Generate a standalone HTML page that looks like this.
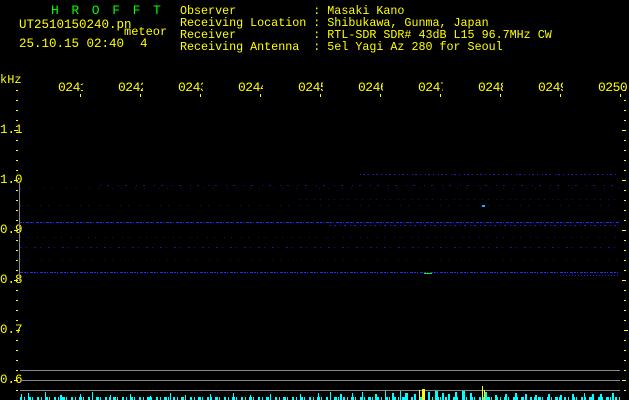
<!DOCTYPE html><html><head><style>
body{margin:0;background:#000;width:629px;height:400px;overflow:hidden;position:relative;font-family:"Liberation Mono",monospace;color:#ff0;}
.t{position:absolute;font-size:11.7px;line-height:12px;white-space:pre;}
.g{color:#0f0;}
.lab{position:absolute;top:80px;font-size:13px;width:25px;overflow:hidden;white-space:nowrap;letter-spacing:-0.5px}
</style></head><body>
<div class="t g" style="left:51px;top:5px;font-size:13px;letter-spacing:12.6px">HROFFT</div>
<div class="t" style="left:19px;top:19px;font-size:12.5px">UT2510150240.pn</div>
<div class="t" style="left:124px;top:26px;font-size:12px">meteor</div>
<div class="t" style="left:19px;top:38px;font-size:12.5px">25.10.15 02:40</div>
<div class="t" style="left:140px;top:38px;font-size:12.5px">4</div>
<div class="t" style="left:180px;top:5px">Observer           : Masaki Kano
Receiving Location : Shibukawa, Gunma, Japan
Receiver           : RTL-SDR SDR# 43dB L15 96.7MHz CW
Receiving Antenna  : 5el Yagi Az 280 for Seoul</div>
<div class="t" style="left:0;top:74px;font-size:12px">kHz</div>
<div class="lab" style="left:58px">0241</div><div class="lab" style="left:118px">0242</div><div class="lab" style="left:178px">0243</div><div class="lab" style="left:238px">0244</div><div class="lab" style="left:298px">0245</div><div class="lab" style="left:358px">0246</div><div class="lab" style="left:418px">0247</div><div class="lab" style="left:478px">0248</div><div class="lab" style="left:538px">0249</div><div class="lab" style="left:598px;width:30px">0250</div>
<div class="t" style="left:0;top:124px;font-size:12.5px">1.1</div>
<div class="t" style="left:0;top:174px;font-size:12.5px">1.0</div>
<div class="t" style="left:0;top:224px;font-size:12.5px">0.9</div>
<div class="t" style="left:0;top:274px;font-size:12.5px">0.8</div>
<div class="t" style="left:0;top:324px;font-size:12.5px">0.7</div>
<div class="t" style="left:0;top:374px;font-size:12.5px">0.6</div>
<svg width="629" height="400" style="position:absolute;left:0;top:0">
<g fill="#ff0">
<rect x="80" y="94" width="1" height="3"/><rect x="140" y="94" width="1" height="3"/><rect x="200" y="94" width="1" height="3"/><rect x="260" y="94" width="1" height="3"/><rect x="320" y="94" width="1" height="3"/><rect x="380" y="94" width="1" height="3"/><rect x="440" y="94" width="1" height="3"/><rect x="500" y="94" width="1" height="3"/><rect x="560" y="94" width="1" height="3"/><rect x="620" y="94" width="1" height="3"/>
</g>
<g fill="#ff0" id="tk">
<rect x="16" y="90" width="2" height="1"/><rect x="16" y="100" width="2" height="1"/><rect x="16" y="110" width="2" height="1"/><rect x="16" y="120" width="2" height="1"/><rect x="14" y="130" width="4" height="1"/><rect x="16" y="140" width="2" height="1"/><rect x="16" y="150" width="2" height="1"/><rect x="16" y="160" width="2" height="1"/><rect x="16" y="170" width="2" height="1"/><rect x="14" y="180" width="4" height="1"/><rect x="16" y="190" width="2" height="1"/><rect x="16" y="200" width="2" height="1"/><rect x="16" y="210" width="2" height="1"/><rect x="16" y="220" width="2" height="1"/><rect x="14" y="230" width="4" height="1"/><rect x="16" y="240" width="2" height="1"/><rect x="16" y="250" width="2" height="1"/><rect x="16" y="260" width="2" height="1"/><rect x="16" y="270" width="2" height="1"/><rect x="14" y="280" width="4" height="1"/><rect x="16" y="290" width="2" height="1"/><rect x="16" y="300" width="2" height="1"/><rect x="16" y="310" width="2" height="1"/><rect x="16" y="320" width="2" height="1"/><rect x="16" y="330" width="4" height="1"/><rect x="16" y="340" width="2" height="1"/><rect x="16" y="350" width="2" height="1"/><rect x="16" y="360" width="2" height="1"/><rect x="16" y="370" width="2" height="1"/><rect x="14" y="380" width="4" height="1"/><rect x="16" y="390" width="2" height="1"/>
</g>
<use href="#tk" transform="translate(608,0)"/>
<rect x="19" y="181" width="1" height="100" fill="#888"/>
<g fill="#888"><rect x="20" y="370" width="600" height="1"/><rect x="20" y="380" width="600" height="1"/><rect x="20" y="390" width="600" height="1"/></g>
<g stroke="#2222c8" stroke-width="1">
<line x1="360" y1="174.5" x2="620" y2="174.5" stroke-dasharray="1 2 2 3 1 4"/>
<line x1="100" y1="185.5" x2="620" y2="185.5" stroke-dasharray="1 6 2 9" opacity=".7"/>
<line x1="20" y1="188.5" x2="620" y2="188.5" stroke-dasharray="1 8 1 13" opacity=".6"/>
<line x1="300" y1="199.5" x2="620" y2="199.5" stroke-dasharray="1 5 1 7" opacity=".6"/>
<line x1="20" y1="205.5" x2="620" y2="205.5" stroke-dasharray="1 7 1 11" opacity=".6"/>
<line x1="20" y1="222.5" x2="620" y2="222.5" stroke="#2a2aff" stroke-dasharray="2 1 1 2 3 1"/>
<line x1="330" y1="225.5" x2="620" y2="225.5" stroke-dasharray="1 3 2 4"/>
<line x1="20" y1="237.5" x2="620" y2="237.5" stroke-dasharray="1 6 1 9" opacity=".6"/>
<line x1="20" y1="247.5" x2="620" y2="247.5" stroke-dasharray="2 4 1 7" opacity=".7"/>
<line x1="20" y1="259.5" x2="620" y2="259.5" stroke-dasharray="1 7 1 12" opacity=".5"/>
<line x1="20" y1="272.5" x2="620" y2="272.5" stroke="#2a2aff" stroke-dasharray="3 1 2 1 1 2"/>
<line x1="560" y1="275.5" x2="620" y2="275.5" stroke-dasharray="1 2"/>
</g>
<rect x="424" y="273" width="8" height="1" fill="#0f0"/>
<rect x="482" y="205" width="3" height="2" fill="#2af"/>
<g fill="#0ff">
<line x1="20" y1="398.5" x2="620" y2="398.5" stroke="#0ff" stroke-width="3" stroke-dasharray="2 2 1 3 3 1 1 4"/>
<rect x="21" y="394" width="1" height="6"/><rect x="28" y="393" width="1" height="7"/><rect x="45" y="392" width="1" height="8"/><rect x="60" y="395" width="2" height="5"/><rect x="80" y="394" width="1" height="6"/><rect x="92" y="392" width="1" height="8"/><rect x="110" y="395" width="1" height="5"/><rect x="130" y="394" width="1" height="6"/><rect x="150" y="396" width="1" height="4"/><rect x="170" y="393" width="1" height="7"/><rect x="185" y="395" width="1" height="5"/><rect x="210" y="394" width="1" height="6"/><rect x="233" y="393" width="1" height="7"/><rect x="250" y="395" width="1" height="5"/><rect x="270" y="394" width="1" height="6"/><rect x="300" y="394" width="1" height="6"/><rect x="318" y="393" width="1" height="7"/><rect x="330" y="392" width="1" height="8"/><rect x="340" y="394" width="2" height="6"/><rect x="352" y="393" width="1" height="7"/><rect x="362" y="392" width="1" height="8"/><rect x="375" y="394" width="2" height="6"/><rect x="385" y="391" width="1" height="9"/><rect x="392" y="393" width="2" height="7"/><rect x="400" y="391" width="1" height="9"/><rect x="405" y="393" width="3" height="7"/><rect x="414" y="394" width="2" height="6"/><rect x="428" y="392" width="2" height="8"/><rect x="435" y="391" width="3" height="9"/><rect x="442" y="393" width="2" height="7"/><rect x="448" y="394" width="2" height="6"/><rect x="455" y="392" width="2" height="8"/><rect x="462" y="391" width="3" height="9"/><rect x="470" y="393" width="2" height="7"/><rect x="485" y="392" width="2" height="8"/><rect x="495" y="395" width="2" height="5"/><rect x="505" y="394" width="2" height="6"/><rect x="515" y="393" width="2" height="7"/><rect x="525" y="394" width="2" height="6"/><rect x="535" y="395" width="2" height="5"/><rect x="548" y="394" width="2" height="6"/><rect x="560" y="395" width="2" height="5"/><rect x="572" y="394" width="2" height="6"/><rect x="584" y="393" width="1" height="7"/><rect x="592" y="394" width="2" height="6"/><rect x="600" y="394" width="2" height="6"/><rect x="612" y="393" width="2" height="7"/>
</g>
<g fill="#ff0"><rect x="419" y="390" width="1" height="10"/><rect x="422" y="389" width="3" height="11"/><rect x="482" y="386" width="1" height="14"/><rect x="484" y="390" width="1" height="10"/></g>
</svg>
</body></html>
